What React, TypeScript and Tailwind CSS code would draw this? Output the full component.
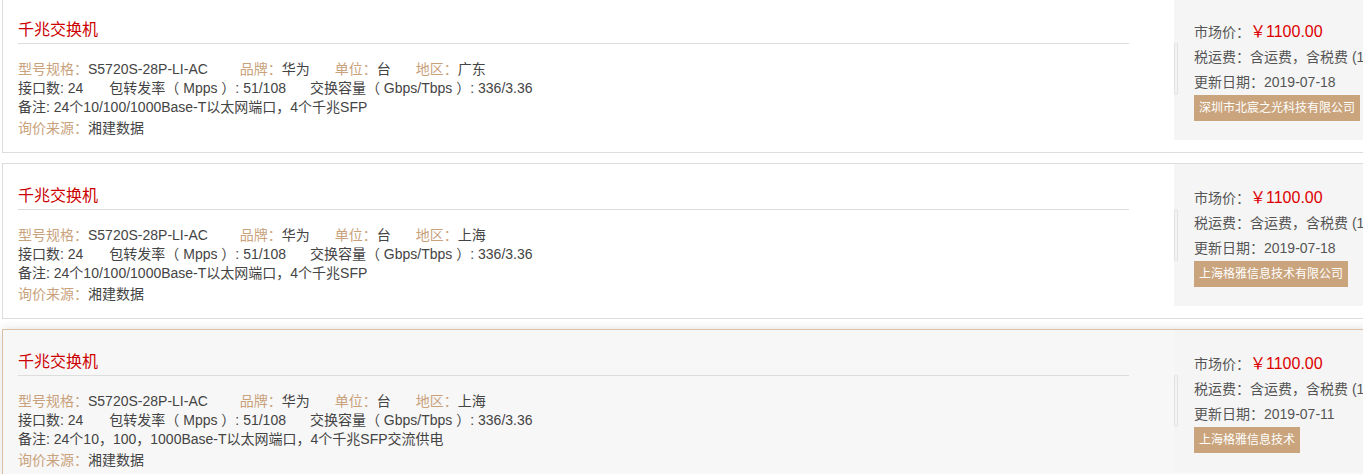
import React from "react";

type Quote = {
  region: string;
  remark: string;
  date: string;
  supplier: string;
  active?: boolean;
};

const QUOTES: Quote[] = [
  {
    region: "广东",
    remark: "24个10/100/1000Base-T以太网端口，4个千兆SFP",
    date: "2019-07-18",
    supplier: "深圳市北宸之光科技有限公司",
  },
  {
    region: "上海",
    remark: "24个10/100/1000Base-T以太网端口，4个千兆SFP",
    date: "2019-07-18",
    supplier: "上海格雅信息技术有限公司",
  },
  {
    region: "上海",
    remark: "24个10，100，1000Base-T以太网端口，4个千兆SFP交流供电",
    date: "2019-07-11",
    supplier: "上海格雅信息技术",
    active: true,
  },
];

function Field({ label, value, className = "mr-[25px]" }: { label: string; value: string; className?: string }) {
  return (
    <span className={className}>
      <span className="text-[#c9a27c]">{label}：</span>
      <span className="text-[#444]">{value}</span>
    </span>
  );
}

function QuoteCard({ q }: { q: Quote }) {
  return (
    <div
      className={`ml-[2px] flex h-[156px] w-[1420px] border ${
        q.active
          ? "border-[#dcc0a2] bg-[#f7f7f7] shadow-[0_0_10px_rgba(0,0,0,0.12)]"
          : "border-[#dddddd] bg-white"
      }`}
    >
      {/* product info */}
      <div className="ml-[15px] w-[1111px] shrink-0">
        <h3 className="mt-[20px] border-b border-[#dddddd] pb-[1px] text-[16px] leading-[24px] font-normal text-[#cc0000]">
          千兆交换机
        </h3>
        <div className="mt-[16px] text-[14px] leading-[19px] text-[#444] whitespace-nowrap">
          <p>
            <Field label="型号规格" value="S5720S-28P-LI-AC" className="mr-[32px]" />
            <Field label="品牌" value="华为" />
            <Field label="单位" value="台" />
            <Field label="地区" value={q.region} />
          </p>
          <p>
            <span className="mr-[26px]">接口数: 24</span>
            <span className="mr-[24px]">包转发率（ Mpps ）: 51/108</span>
            <span>交换容量（ Gbps/Tbps ）: 336/3.36</span>
          </p>
          <p>备注: {q.remark}</p>
          <p className="mt-[2px]">
            <Field label="询价来源" value="湘建数据" />
          </p>
        </div>
      </div>

      {/* price panel */}
      <div className="relative ml-[45px] h-[142px] w-[230px] shrink-0 bg-[#f5f5f5] pl-[20px] pt-[21px] text-[14px] leading-[25px] text-[#555] whitespace-nowrap">
        <div className="absolute left-0 top-[45px] h-[52px] w-[4px] rounded-full border border-[#e2e2e2] bg-[#f3f3f3]" />
        <p>
          市场价：<span className="text-[16px] text-[#dd0000]">￥1100.00</span>
        </p>
        <p>税运费：含运费，含税费 (13%)</p>
        <p>更新日期：{q.date}</p>
        <span className="mt-[-1px] inline-block h-[26px] bg-[#c9a47c] px-[5px] text-[12px] leading-[26px] text-white">
          {q.supplier}
        </span>
      </div>
    </div>
  );
}

export default function App() {
  return (
    <div
      className="h-[474px] w-full overflow-hidden bg-white"
      style={{ fontFamily: '"Liberation Sans", "Noto Sans CJK SC", sans-serif' }}
    >
      <div className="-mt-[3px] flex flex-col gap-[10px]">
        {QUOTES.map((q, i) => (
          <QuoteCard key={i} q={q} />
        ))}
      </div>
    </div>
  );
}
